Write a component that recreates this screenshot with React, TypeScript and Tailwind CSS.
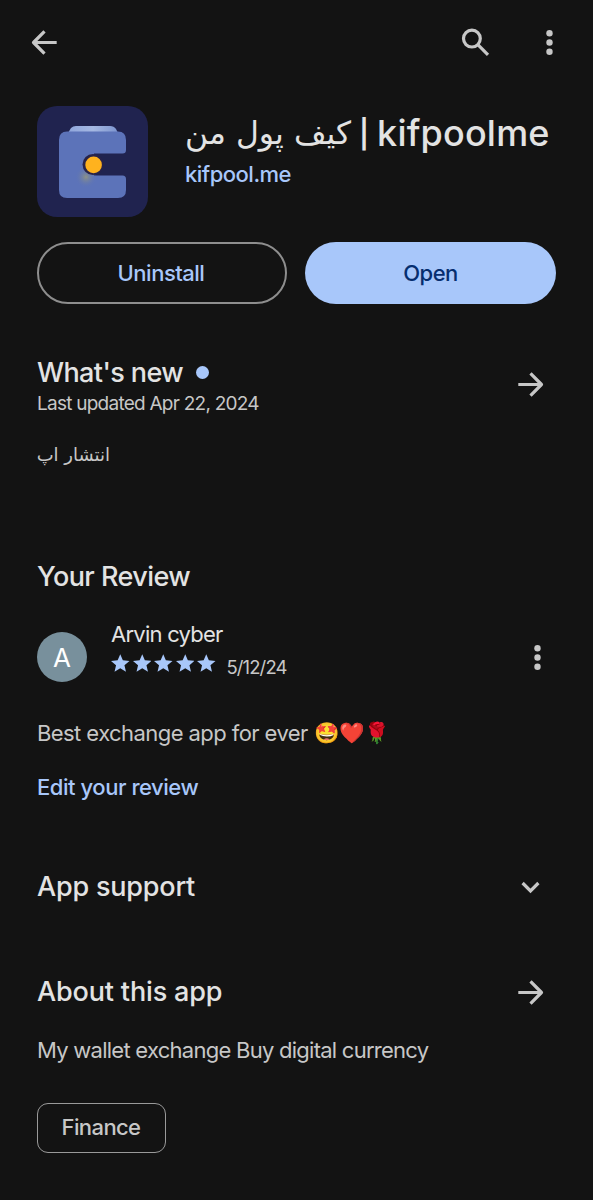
import type { ReactNode } from "react";

type IconProps = { className?: string };

function Arrow({ className = "" }: IconProps) {
  return (
    <svg viewBox="0 0 37 37" className={`h-[37px] w-[37px] shrink-0 ${className}`} fill="none" stroke="#c7c7c7" strokeWidth="3.2">
      <path d="M6.3 18.5H29.5M18.5 7.4L29.5 18.5L18.5 29.6" strokeLinejoin="round" />
    </svg>
  );
}

function MoreVert() {
  return (
    <svg viewBox="0 0 37 37" className="h-[37px] w-[37px] shrink-0" fill="#c7c7c7">
      <circle cx="18.5" cy="9.2" r="3.2" />
      <circle cx="18.5" cy="18.5" r="3.2" />
      <circle cx="18.5" cy="27.8" r="3.2" />
    </svg>
  );
}

function SearchIcon() {
  return (
    <svg viewBox="0 0 37 37" className="h-[37px] w-[37px] shrink-0" fill="none" stroke="#c7c7c7" strokeWidth="3.2">
      <circle cx="14.9" cy="14.6" r="8.4" />
      <path d="M20.6 20.4L31 30.8" />
    </svg>
  );
}

function Chevron() {
  return (
    <svg viewBox="0 0 37 37" className="h-[37px] w-[37px] shrink-0" fill="none" stroke="#c7c7c7" strokeWidth="3.2">
      <path d="M10.6 14L18.5 21.9L26.4 14" />
    </svg>
  );
}

function Star() {
  return (
    <svg viewBox="2 2 20 19" className="h-[18px] w-[18.5px]" fill="#a8c7fa">
      <path d="M12 17.27L18.18 21l-1.64-7.03L22 9.24l-7.19-.61L12 2 9.19 8.63 2 9.24l5.46 4.73L5.82 21z" />
    </svg>
  );
}

function AppLogo() {
  return (
    <svg viewBox="0 0 111 111" className="h-[111px] w-[111px] shrink-0">
      <defs>
        <linearGradient id="flap" x1="0" x2="1">
          <stop offset="0" stopColor="#8fa6dc" />
          <stop offset="0.5" stopColor="#a5b8e2" />
          <stop offset="1" stopColor="#7d95cf" />
        </linearGradient>
        <radialGradient id="glow">
          <stop offset="0" stopColor="#9a9a78" stopOpacity="0.8" />
          <stop offset="1" stopColor="#5a72b8" stopOpacity="0" />
        </radialGradient>
      </defs>
      <rect width="111" height="111" rx="20" fill="#20234f" />
      <path d="M31 27L34 22Q36 20 39 20H73Q77 20 79 23L81 27Z" fill="url(#flap)" />
      <path
        d="M30 25.5H81Q89 25.5 89 34V44Q89 47.5 85.5 47.5H57V69.5H85.5Q89 69.5 89 73V84Q89 92 81 92H30Q22 92 22 84V34Q22 25.5 30 25.5Z"
        fill="#5c73b9"
      />
      <circle cx="49" cy="71" r="11" fill="url(#glow)" />
      <circle cx="56" cy="58.5" r="10.5" fill="#28234a" />
      <circle cx="56.6" cy="58.9" r="8.3" fill="#ffb21e" />
    </svg>
  );
}

function SectionTitle({ children, className = "" }: { children: ReactNode; className?: string }) {
  return <h2 className={`text-[27px] leading-8 font-medium text-[#e3e3e3] ${className}`}>{children}</h2>;
}

export default function App() {
  return (
    <main className="flex h-[1200px] w-[593px] flex-col overflow-hidden bg-[#131313] font-['Inter','Noto_Sans',sans-serif] whitespace-nowrap text-[#c7c7c7]">
      <header className="flex h-[85px] shrink-0 items-center pr-[25px] pl-[26px]">
        <Arrow className="rotate-180" />
        <div className="ml-auto flex gap-[37px]">
          <SearchIcon />
          <MoreVert />
        </div>
      </header>

      <section className="mt-[20.5px] flex h-[111.5px] shrink-0 pl-[37px]">
        <AppLogo />
        <div className="ml-[37px] pt-[5px]">
          <h1 dir="ltr" className="flex h-11 items-center text-[36px] font-medium text-[#e3e3e3]">
            <span dir="rtl" className="w-[166px] font-['DejaVu_Sans',sans-serif] text-[31.5px] leading-10 font-normal">کیف پول من</span>
            <span className="mt-[3px] ml-[8px] text-[28px] leading-10 font-semibold">|</span>
            <span className="ml-[8px] leading-[42px] tracking-[0.2px]">kifpoolme</span>
          </h1>
          <p className="mt-px text-[22px] leading-9 font-medium tracking-[-0.5px] text-[#a8c7fa]"><span>kifpool.me</span></p>
        </div>
      </section>

      <div className="mt-[25px] flex h-[62px] shrink-0 gap-[18px] pr-[37px] pl-[37px] text-[22px] font-medium tracking-[-0.5px]">
        <button className="w-[250px] rounded-full border-2 border-[#8e8e8e] pr-[2px] text-[#a8c7fa]"><span>Uninstall</span></button>
        <button className="w-[251px] rounded-full bg-[#a8c7fa] text-[#062e6f]"><span>Open</span></button>
      </div>

      <section className="mt-[52px] flex h-[112px] shrink-0 justify-between pr-[44px] pl-[37px]">
        <div className="pt-px">
          <div className="flex items-center">
            <SectionTitle className="tracking-[-0.6px]">What's new</SectionTitle>
            <span className="mb-[2px] ml-[13px] h-[13px] w-[13px] rounded-full bg-[#a8c7fa]" />
          </div>
          <p className="text-[19px] leading-[30px] tracking-[-0.75px]"><span>Last updated Apr 22, 2024</span></p>
          <p dir="rtl" className="mt-[19px] w-[73px] font-['DejaVu_Sans',sans-serif] text-[18px] leading-[34px]">انتشار اپ</p>
        </div>
        <Arrow className="mt-[10px]" />
      </section>

      <section className="mt-[93px] shrink-0 pr-[37px] pl-[37px]">
        <SectionTitle className="tracking-[-0.55px]">Your Review</SectionTitle>
        <div className="mt-[25px] flex h-[64px]">
          <div className="mt-[14px] flex h-[50px] w-[50px] items-center justify-center rounded-full bg-[#78909c] text-[26px] text-white">A</div>
          <div className="ml-6">
            <p className="text-[22px] leading-8 tracking-[-0.75px] text-[#e3e3e3]"><span>Arvin cyber</span></p>
            <div className="flex items-start">
              <div className="mt-[4px] flex gap-[3px]">
                {[1, 2, 3, 4, 5].map((n) => <Star key={n} />)}
              </div>
              <span className="ml-[11px] text-[18.5px] leading-[35px] tracking-[-0.9px]">5/12/24</span>
            </div>
          </div>
          <div className="mt-[21px] ml-auto"><MoreVert /></div>
        </div>
        <p className="mt-[35px] flex text-[22px] leading-8 tracking-[-0.57px]">
          <span>Best exchange app for ever</span>
          <span className="ml-[6px] text-[20.5px] tracking-[-1px]">🤩❤️🌹</span>
        </p>
        <p className="mt-[22px] text-[22px] leading-8 font-medium tracking-[-0.45px] text-[#a8c7fa]"><span>Edit your review</span></p>
      </section>

      <section className="mt-[64px] flex h-[40px] shrink-0 items-center justify-between pr-[44px] pl-[37px]">
        <SectionTitle className="tracking-[-0.2px]">App support</SectionTitle>
        <Chevron />
      </section>

      <section className="mt-[65px] shrink-0 pr-[44px] pl-[37px]">
        <div className="flex h-10 items-center justify-between">
          <SectionTitle className="tracking-[-0.15px]">About this app</SectionTitle>
          <Arrow />
        </div>
        <p className="mt-[22px] text-[22px] leading-8 tracking-[-0.74px]"><span>My wallet exchange Buy digital currency</span></p>
        <div className="mt-[37px] flex h-[50px] w-[129px] items-center justify-center rounded-[11px] border-[1.5px] border-[#9a9a9a] pr-px pb-[2px] text-[22px] font-medium tracking-[-0.6px]">
          <span>Finance</span>
        </div>
      </section>
    </main>
  );
}
